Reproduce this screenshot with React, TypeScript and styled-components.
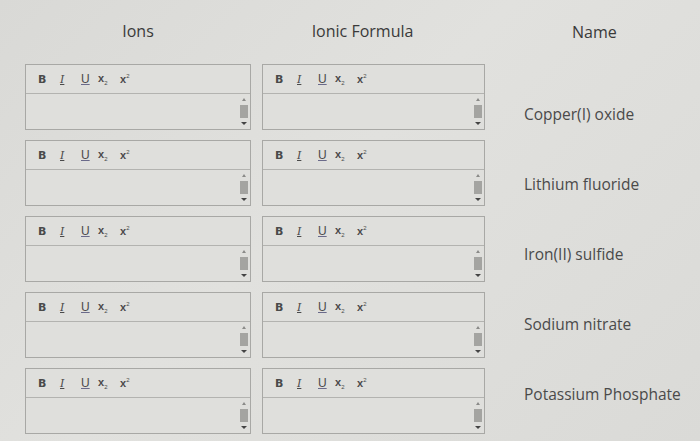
import styled, { createGlobalStyle } from "styled-components";

const GlobalStyle = createGlobalStyle`
  html, body {
    margin: 0;
    padding: 0;
    background: #dcdcd9;
  }
  body {
    font-family: "Open Sans", Lato, sans-serif;
    color: #454545;
  }
`;

const Page = styled.div`
  width: 700px;
  height: 441px;
  overflow: hidden;
  display: flex;
  padding-left: 25px;
  box-sizing: border-box;
  background: linear-gradient(135deg, #d9d9d6 0%, #e1e1de 45%, #dadad7 100%);
`;

const Column = styled.div<{ $width: number; $gap?: number }>`
  width: ${(p) => p.$width}px;
  margin-right: ${(p) => p.$gap ?? 0}px;
  display: flex;
  flex-direction: column;
  gap: 10px;
`;

const Header = styled.div<{ $shift?: number }>`
  height: 54px;
  display: flex;
  align-items: center;
  justify-content: center;
  padding-top: 8px;
  padding-right: ${(p) => p.$shift ?? 0}px;
  font-size: 16px;
  color: #3a3a3a;
  box-sizing: border-box;
`;

const NameHeader = styled.div`
  height: 64px;
  padding: 21px 0 0 48px;
  box-sizing: border-box;
  font-size: 16px;
  color: #3a3a3a;
`;

const NameList = styled.div`
  display: flex;
  flex-direction: column;
  gap: 50px;
  padding-top: 40px;
`;

const NameItem = styled.div`
  height: 20px;
  line-height: 20px;
  font-size: 15.5px;
  color: #4a4a4a;
  white-space: nowrap;
`;

const Editor = styled.div`
  height: 66px;
  border: 1px solid #a8a8a5;
  background: #dfdfdc;
  display: flex;
  flex-direction: column;
  box-sizing: border-box;
`;

const Toolbar = styled.div`
  height: 28px;
  border-bottom: 1px solid #b3b3b0;
  display: flex;
  align-items: center;
  padding-left: 12px;
  font-family: "Liberation Sans", Arial, sans-serif;
  font-size: 12px;
  color: #4a4a4a;
`;

const Tool = styled.span<{ $w: number }>`
  width: ${(p) => p.$w}px;
  display: inline-block;
`;

const Bold = styled(Tool)`
  font-weight: 600;
  font-family: "DejaVu Sans", sans-serif;
  font-size: 11px;
`;

const Italic = styled(Tool)`
  font-style: italic;
  text-decoration: underline;
  text-decoration-thickness: 1px;
  font-family: "DejaVu Serif", serif;
  font-size: 11px;
`;

const Under = styled(Tool)`
  text-decoration: underline;
  text-decoration-color: #6a6a8a;
`;

const Script = styled(Tool)`
  font-weight: bold;
  font-size: 11px;
  sub, sup {
    font-size: 6px;
    font-weight: normal;
  }
`;

const Body = styled.div`
  flex: 1;
  display: flex;
  justify-content: flex-end;
  padding: 4px 2px 4px 0;
`;

const Scrollbar = styled.div`
  width: 8px;
  display: flex;
  flex-direction: column;
  align-items: center;
  justify-content: space-between;
`;

const Thumb = styled.div`
  width: 8px;
  height: 13px;
  background: #a4a4a1;
`;

const UpArrow = styled.div`
  width: 0;
  height: 0;
  border-left: 2px solid transparent;
  border-right: 2px solid transparent;
  border-bottom: 3px solid #8a8a88;
`;

const DownArrow = styled.div`
  width: 0;
  height: 0;
  border-left: 3px solid transparent;
  border-right: 3px solid transparent;
  border-top: 3px solid #444;
`;

function RichBox() {
  return (
    <Editor>
      <Toolbar>
        <Bold $w={22}>B</Bold>
        <Italic $w={21}>I</Italic>
        <Under $w={17}>U</Under>
        <Script $w={22}>
          x<sub>2</sub>
        </Script>
        <Script $w={20}>
          x<sup>2</sup>
        </Script>
      </Toolbar>
      <Body>
        <Scrollbar>
          <UpArrow />
          <Thumb />
          <DownArrow />
        </Scrollbar>
      </Body>
    </Editor>
  );
}

const names = [
  "Copper(I) oxide",
  "Lithium fluoride",
  "Iron(II) sulfide",
  "Sodium nitrate",
  "Potassium Phosphate",
];

export default function App() {
  const rows = [0, 1, 2, 3, 4];
  return (
    <>
      <GlobalStyle />
      <Page>
        <Column $width={226} $gap={11}>
          <Header>Ions</Header>
          {rows.map((r) => (
            <RichBox key={r} />
          ))}
        </Column>
        <Column $width={223} $gap={39}>
          <Header $shift={22}>Ionic Formula</Header>
          {rows.map((r) => (
            <RichBox key={r} />
          ))}
        </Column>
        <div>
          <NameHeader>Name</NameHeader>
          <NameList>
            {names.map((n) => (
              <NameItem key={n}>{n}</NameItem>
            ))}
          </NameList>
        </div>
      </Page>
    </>
  );
}
